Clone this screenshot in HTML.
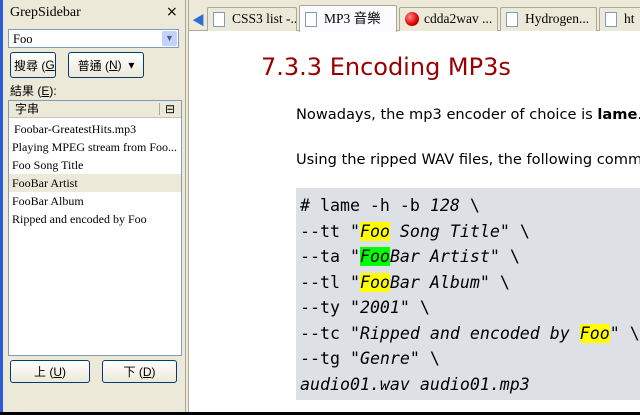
<!DOCTYPE html>
<html><head><meta charset="utf-8"><style>
*{margin:0;padding:0;box-sizing:border-box}
body{width:640px;height:415px;overflow:hidden;background:#fff;position:relative;font-family:"Liberation Serif","Noto Serif CJK SC",serif;font-size:12px;color:#000}
.a{position:absolute}
.side{left:0;top:0;width:185px;height:413px;background:#ece9d8;border-left:3px solid #2a5bd7}
.btn{position:absolute;border:1px solid #003c74;border-radius:3px;background:linear-gradient(#fff,#ece9d8);font-family:"Liberation Sans","Noto Sans CJK TC",sans-serif;font-size:12px;display:flex;align-items:center;justify-content:center;white-space:nowrap;overflow:hidden}
.item{position:absolute;left:3px;width:168px;height:18px;line-height:18px;font-size:12px;white-space:nowrap;overflow:hidden}
.tab{position:absolute;top:7px;height:24px;border:1px solid #aca899;border-bottom:none;background:#ece9d8;font-size:13.5px;line-height:22px;padding-left:24px;white-space:nowrap;overflow:hidden;border-radius:2px 2px 0 0}
.doc{position:absolute;left:5px;top:4px;width:12px;height:15px;background:#fff;border:1px solid #7f9db9}
.code{left:296px;top:188px;width:344px;height:212px;background:#dde1e6;font-family:"DejaVu Sans Mono",monospace;font-size:16.6px;line-height:25.5px;padding:5px 0 0 4px;white-space:pre}
.code i{font-style:italic}
.y{background:#ff0}.g{background:#0f0}
</style></head><body>
<div class="a side">
 <div class="a" style="left:7px;top:5px;font-size:14px">GrepSidebar</div>
 <div class="a" style="left:163px;top:4px;font-family:'DejaVu Sans';font-size:14px">×</div>
 <div class="a" style="left:5px;top:29px;width:171px;height:19px;background:#fff;border:1px solid #7f9db9;font-size:12.5px;padding:2px 0 0 4px">Foo
  <div class="a" style="right:1px;top:1px;width:15px;height:15px;background:#c1d3fb;border-radius:2px;color:#4d6185;font-size:9px;text-align:center;line-height:15px">▼</div></div>
 <div class="btn" style="left:7px;top:52px;width:46px;height:26px;justify-content:flex-start;padding-left:3px">搜尋 (<u>G</u>)</div>
 <div class="btn" style="left:65px;top:52px;width:76px;height:26px">普通 (<u>N</u>) &nbsp;▾</div>
 <div class="a" style="left:7px;top:82px;font-family:'Liberation Sans','Noto Sans CJK TC',sans-serif;font-size:12px">結果 (<u>E</u>):</div>
 <div class="a" style="left:5px;top:100px;width:174px;height:256px;background:#fff;border:1px solid #7f9db9">
  <div class="a" style="left:0;top:0;width:172px;height:17px;background:#ece9d8;border-bottom:1px solid #c7c5b2;font-family:'Noto Sans CJK TC',sans-serif;font-size:12px;padding-left:6px;line-height:16px">字串<span class="a" style="left:150px;top:2px;width:1px;height:12px;background:#aca899"></span><span class="a" style="left:156px;top:0">⊟</span></div>
  <div class="item" style="top:19px;left:5px">Foobar-GreatestHits.mp3</div>
  <div class="item" style="top:37px">Playing MPEG stream from Foo...</div>
  <div class="item" style="top:55px">Foo Song Title</div>
  <div class="item" style="top:73px;left:0;width:172px;padding-left:3px;background:#ece9d8">FooBar Artist</div>
  <div class="item" style="top:91px">FooBar Album</div>
  <div class="item" style="top:109px">Ripped and encoded by Foo</div>
 </div>
 <div class="btn" style="left:7px;top:360px;width:80px;height:23px">上 (<u>U</u>)</div>
 <div class="btn" style="left:99px;top:360px;width:75px;height:23px">下 (<u>D</u>)</div>
</div>
<div class="a" style="left:185px;top:0;width:4px;height:413px;background:#ece9d8;border-left:1px solid #aca899;border-right:1px solid #aca899"></div>
<div class="a" style="left:189px;top:0;width:451px;height:31px;background:#ece9d8;border-bottom:1px solid #aca899"></div>
<div class="a" style="left:192px;top:10px;color:#2a6fd6;font-size:13px">◀</div>
<div class="tab" style="left:207px;width:90px"><span class="doc"></span>CSS3 list -...</div>
<div class="tab" style="left:299px;top:5px;height:27px;width:98px;background:#fcfcfe;line-height:26px;font-family:'Liberation Serif','Noto Sans CJK TC',serif"><span class="doc" style="top:6px"></span>MP3 音樂</div>
<div class="tab" style="left:399px;width:99px"><span class="a" style="left:5px;top:4px;width:14px;height:14px;border-radius:50%;background:radial-gradient(circle at 35% 35%,#f88,#d00 60%,#800)"></span>cdda2wav ...</div>
<div class="tab" style="left:500px;width:97px"><span class="doc"></span>Hydrogen...</div>
<div class="tab" style="left:599px;width:45px"><span class="doc"></span>ht</div>
<div class="a" style="left:261px;top:53px;font-family:'DejaVu Sans',sans-serif;font-size:24px;color:#990000;white-space:nowrap">7.3.3 Encoding MP3s</div>
<div class="a" style="left:296px;top:106px;font-family:'DejaVu Sans',sans-serif;font-size:14.6px;white-space:nowrap">Nowadays, the mp3 encoder of choice is <b>lame</b>.</div>
<div class="a" style="left:296px;top:151px;font-family:'DejaVu Sans',sans-serif;font-size:14.6px;white-space:nowrap">Using the ripped WAV files, the following comm</div>
<div class="a code"># lame -h -b <i>128</i> \
--tt "<i><span class="y">Foo</span> Song Title</i>" \
--ta "<i><span class="g">Foo</span>Bar Artist</i>" \
--tl "<i><span class="y">Foo</span>Bar Album</i>" \
--ty "<i>2001</i>" \
--tc "<i>Ripped and encoded by <span class="y">Foo</span></i>" \
--tg "<i>Genre</i>" \
<i>audio01.wav audio01.mp3</i></div>
<div class="a" style="left:0;top:412px;width:640px;height:3px;background:#000"></div>
</body></html>
